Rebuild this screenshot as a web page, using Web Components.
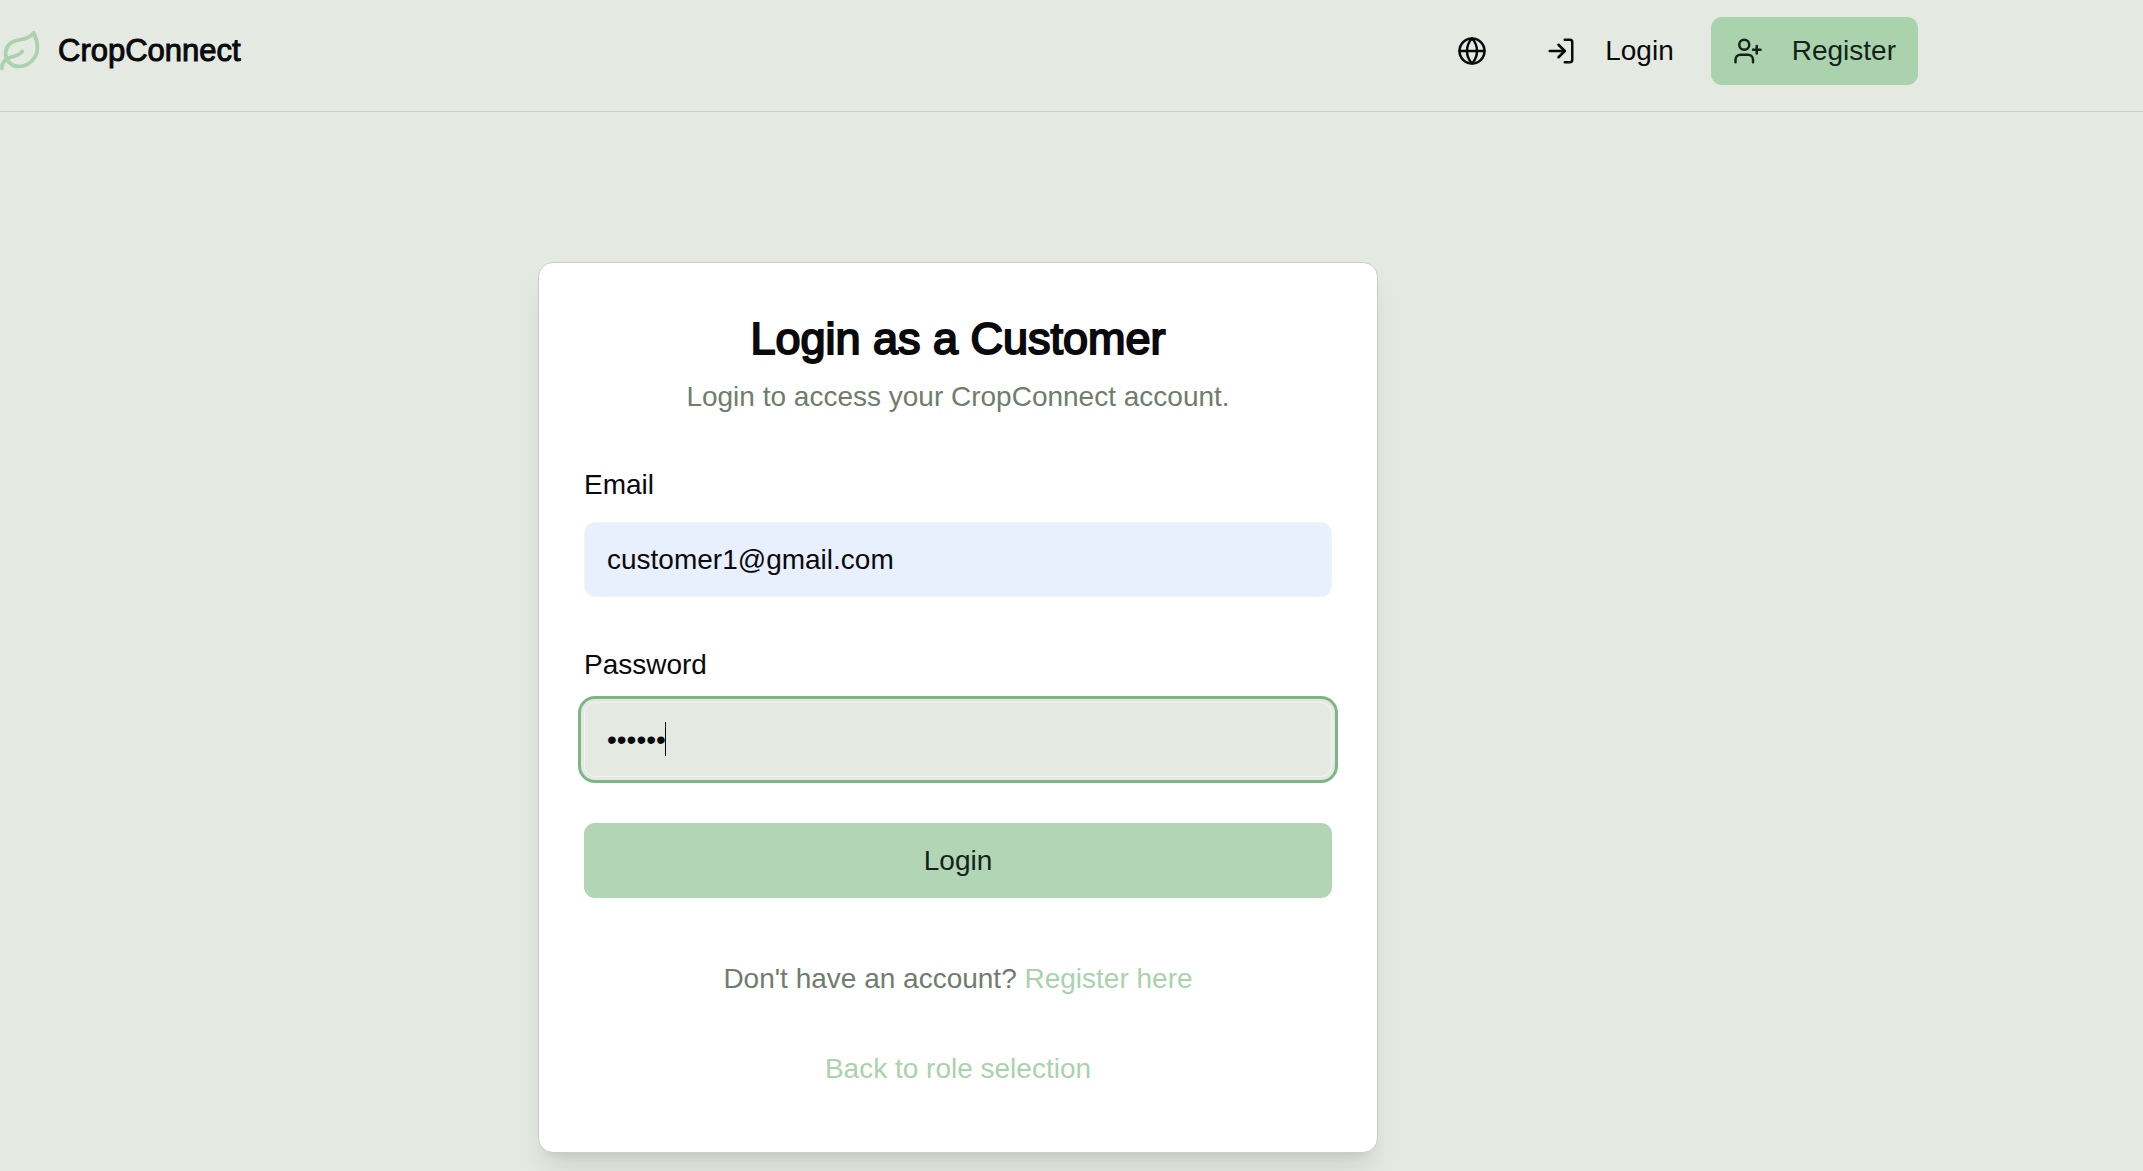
<!DOCTYPE html>
<html lang="en">
<head>
<meta charset="utf-8">
<title>CropConnect</title>
<style>
  :root {
    --bg: #e4e9e1; --ink: #0a0a0d; --muted: #707c6c; --line: #c8cec5;
    --green: #a9d2ad; --on-green: #14231a; --ring: #7ab782;
  }
  body {
    margin: 0; min-height: 100vh; background: var(--bg); color: var(--ink);
    font: 28px/40px "Liberation Sans", Arial, sans-serif;
  }
</style>
</head>
<body>
<cc-header></cc-header>
<cc-login-page></cc-login-page>
<script>
const icons = {
  globe: '<circle cx="12" cy="12" r="10"/><path d="M12 2a14.5 14.5 0 0 0 0 20 14.5 14.5 0 0 0 0-20"/><path d="M2 12h20"/>',
  login: '<path d="M15 3h4a2 2 0 0 1 2 2v14a2 2 0 0 1-2 2h-4"/><path d="M10 17l5-5-5-5"/><path d="M15 12H3"/>',
  userplus: '<path d="M16 21v-2a4 4 0 0 0-4-4H6a4 4 0 0 0-4 4v2"/><circle cx="9" cy="7" r="4"/><path d="M19 8v6M22 11h-6"/>'
};

function define(name, render) {
  customElements.define(name, class extends HTMLElement {
    connectedCallback() {
      if (this.shadowRoot) return;
      this.attachShadow({ mode: 'open' }).innerHTML = render(this);
    }
  });
}

define('cc-icon', el => `
  <style>
    :host { display: block; flex: none; width: 30px; height: 30px; }
    svg { display: block; width: 100%; height: 100%; fill: none; stroke: currentColor;
      stroke-width: 2; stroke-linecap: round; stroke-linejoin: round; }
  </style>
  <svg viewBox="0 0 24 24" aria-hidden="true">${icons[el.getAttribute('name')]}</svg>`);

define('cc-brand', () => `
  <style>
    :host { display: block; }
    a { display: flex; align-items: center; gap: 15px; color: inherit; text-decoration: none;
      font-size: 31px; line-height: 42px; -webkit-text-stroke: 1px currentColor; }
    svg { display: block; width: 43px; height: 45px; fill: none; stroke: var(--green);
      stroke-width: 2; stroke-linecap: round; stroke-linejoin: round; }
  </style>
  <a href="#home">
    <svg viewBox="1 0 23 24" aria-hidden="true"><path d="M11 20A7 7 0 0 1 9.8 6.1C15.5 5 17 4.48 19 2c1 2 2 4.18 2 8 0 5.5-4.78 10-10 10Z"/><path d="M2 21c0-3 1.85-5.36 5.08-6C9.5 14.52 12 13 13 12"/></svg>
    <span>CropConnect</span>
  </a>`);

define('cc-nav-link', el => `
  <style>
    :host { display: block; }
    a { display: flex; align-items: center; gap: 29px; height: 68px; padding: 0 22px;
      border-radius: 11px; color: inherit; text-decoration: none; }
    :host([primary]) a { background: var(--green); color: var(--on-green); }
  </style>
  <a href="${el.getAttribute('href')}"><cc-icon name="${el.getAttribute('icon')}"></cc-icon><slot></slot></a>`);

define('cc-header', () => `
  <style>
    :host { display: block; border-bottom: 1px solid var(--line); }
    header { display: flex; align-items: center; justify-content: space-between;
      padding: 17px 225px 26px 0; }
    nav { display: flex; align-items: center; gap: 15px; }
    button { display: block; border: 0; background: none; color: inherit; padding: 19px 22px; }
  </style>
  <header>
    <cc-brand></cc-brand>
    <nav>
      <button type="button" aria-label="Language"><cc-icon name="globe"></cc-icon></button>
      <cc-nav-link href="#login" icon="login">Login</cc-nav-link>
      <cc-nav-link primary href="#register" icon="userplus">Register</cc-nav-link>
    </nav>
  </header>`);

define('cc-field', el => `
  <style>
    :host { display: flex; flex-direction: column; gap: 15px; }
    label { line-height: 44px; }
    .box { position: relative; display: flex; }
    input { box-sizing: border-box; width: 100%; min-width: 0; height: 75px; margin: 0; padding: 0 22px;
      border: 1px solid #f3f4f1; border-radius: 11px; outline: 0; background: var(--bg);
      color: var(--ink); font: inherit; }
    :host([filled]) input { background: #e8f0fe; }
    :host([active]) input { box-shadow: 0 0 0 3px #e6e7e3, 0 0 0 6px var(--ring); }
    .caret { display: none; position: absolute; left: 81px; top: 20px; width: 1px; height: 34px;
      background: var(--ink); }
    :host([active]) .caret { display: block; }
  </style>
  <label for="control">${el.getAttribute('label')}</label>
  <div class="box">
    <input id="control" type="${el.getAttribute('type')}" value="${el.getAttribute('value')}">
    <span class="caret"></span>
  </div>`);

define('cc-card', () => `
  <style>
    :host { display: block; box-sizing: border-box; width: 100%; max-width: 840px;
      padding: 44px 45px 63px; border: 1px solid var(--line); border-radius: 15px; background: #fff;
      box-shadow: 0 19px 28px -6px rgb(0 0 0 / .1), 0 8px 11px -8px rgb(0 0 0 / .1); }
    .head { display: flex; flex-direction: column; gap: 6px; margin-bottom: 46px; text-align: center; }
    .foot { display: flex; flex-direction: column; gap: 50px; margin-top: 61px; text-align: center; color: var(--muted); }
  </style>
  <div class="head"><slot name="head"></slot></div>
  <slot></slot>
  <div class="foot"><slot name="foot"></slot></div>`);

define('cc-login-page', () => `
  <style>
    :host { display: block; }
    main { display: flex; justify-content: center; padding: 150px 227px 0 0; }
    h1, p { margin: 0; }
    h1 { font-size: 45px; line-height: 64px; font-weight: 400; -webkit-text-stroke: 2px currentColor; }
    p { color: var(--muted); }
    form { display: flex; flex-direction: column; gap: 46px; }
    button { height: 75px; border: 0; border-radius: 11px; background: #b1d5b5;
      color: var(--on-green); font: inherit; }
    a { color: var(--green); text-decoration: none; }
  </style>
  <main>
    <cc-card>
      <h1 slot="head">Login as a Customer</h1>
      <p slot="head">Login to access your CropConnect account.</p>
      <form>
        <cc-field filled label="Email" type="email" value="customer1@gmail.com"></cc-field>
        <cc-field active label="Password" type="password" value="secret"></cc-field>
        <button type="button">Login</button>
      </form>
      <p slot="foot">Don't have an account? <a href="#register">Register here</a></p>
      <p slot="foot"><a href="#roles">Back to role selection</a></p>
    </cc-card>
  </main>`);
</script>
</body>
</html>
